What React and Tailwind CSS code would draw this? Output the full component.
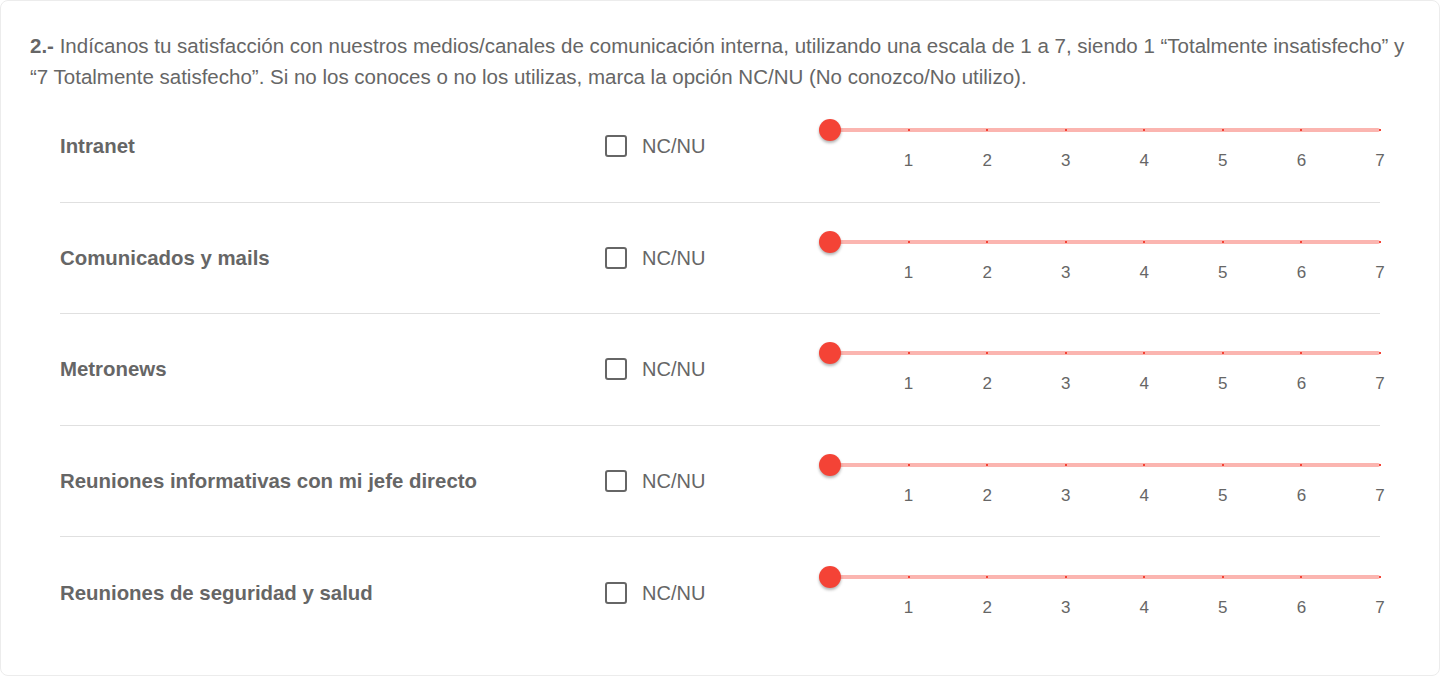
import { useState } from 'react';

const channels = [
  'Intranet',
  'Comunicados y mails',
  'Metronews',
  'Reuniones informativas con mi jefe directo',
  'Reuniones de seguridad y salud',
];

const steps = [1, 2, 3, 4, 5, 6, 7];

const Slider = () => (
  <div className="relative w-[561px] h-[54px]">
    {/* track */}
    <div className="absolute left-[11px] right-0 top-[9px] h-[4px] rounded-full bg-[#fbb5b0]" />
    {steps.map((n) => (
      <div
        key={n}
        className="absolute top-[10px] h-[2px] w-[2px] -ml-[1px] bg-[#f44336]"
        style={{ left: 11 + (550 * n) / 7 }}
      />
    ))}
    {/* thumb */}
    <div className="absolute left-0 top-0 h-[22px] w-[22px] rounded-full bg-[#f44336] shadow-[0_2px_3px_rgba(0,0,0,0.3)]" />
    {steps.map((n) => (
      <span
        key={n}
        className="absolute top-[32px] w-[30px] -ml-[15px] text-center text-[17px] leading-[20px] text-[#666]"
        style={{ left: 11 + (550 * n) / 7 }}
      >
        {n}
      </span>
    ))}
  </div>
);

const Row = ({ label, last }) => {
  const [checked, setChecked] = useState(false);
  return (
    <div
      className={`flex h-[111.5px] items-center ${
        last ? '' : 'border-b border-[#e0e0e0]'
      }`}
    >
      <div className="w-[545px] pt-[1px] text-[20.4px] font-bold text-[#666]">{label}</div>
      <label className="flex w-[214px] cursor-pointer items-center gap-[15px] text-[20px] text-[#666]">
        <span
          onClick={() => setChecked(!checked)}
          className={`h-[22px] w-[22px] rounded-[3px] border-2 border-[#666] ${
            checked ? 'bg-[#666]' : 'bg-white'
          }`}
        />
        NC/NU
      </label>
      <Slider />
    </div>
  );
};

export default function App() {
  return (
    <div className="h-[676px] bg-white font-['Liberation_Sans',Arial,sans-serif]">
      <div className="h-full rounded-[8px] border border-[#ececec] px-[29px] pt-[29px]">
        <p className="text-[20.5px] leading-[31px] text-[#666]">
          <span className="font-bold">2.-</span> Indícanos tu satisfacción con
          nuestros medios/canales de comunicación interna, utilizando una escala
          de 1 a 7, siendo 1 “Totalmente insatisfecho” y
          <br />
          “7 Totalmente satisfecho”. Si no los conoces o no los utilizas, marca
          la opción NC/NU (No conozco/No utilizo).
        </p>
        <div className="mx-[30px] -mt-[1px]">
          {channels.map((c, i) => (
            <Row key={c} label={c} last={i === channels.length - 1} />
          ))}
        </div>
      </div>
    </div>
  );
}
